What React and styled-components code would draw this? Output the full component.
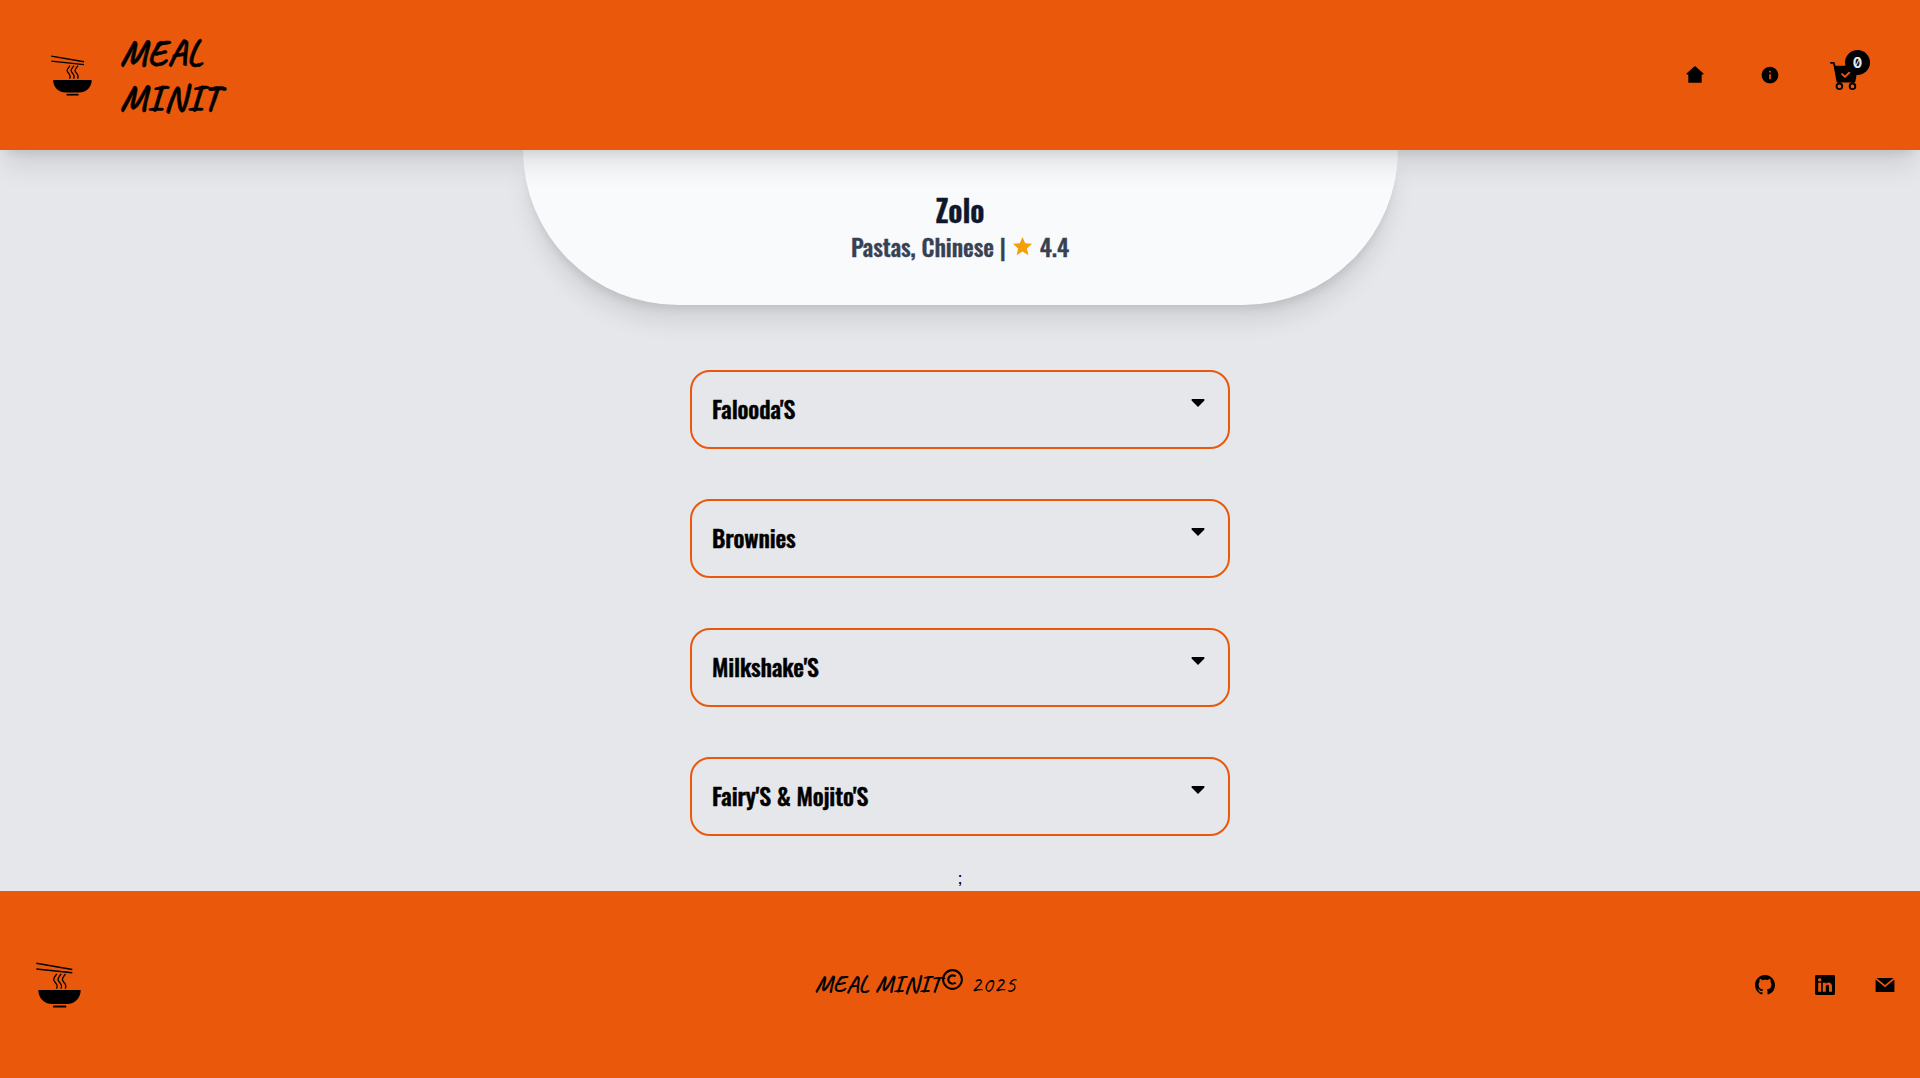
import React from "react";
import styled, { createGlobalStyle } from "styled-components";
import { BsCartCheckFill, BsGithub, BsLinkedin } from "react-icons/bs";
import { BiCopyright } from "react-icons/bi";
import { MdInfo, MdStar } from "react-icons/md";
import { TiArrowSortedDown } from "react-icons/ti";

const shadow = "0 20px 25px -5px rgba(0, 0, 0, 0.1), 0 8px 10px -6px rgba(0, 0, 0, 0.1)";

const Global = createGlobalStyle`
  *, *::before, *::after { box-sizing: border-box; }
  body { margin: 0; background: #e5e7eb; font-family: Oswald, Roboto, sans-serif; color: #000; }
  h1, h2, h3, p { margin: 0; font: inherit; }
  svg { display: block; flex: none; }
`;

const Page = styled.div`
  display: flex;
  flex-direction: column;
  height: 1078px;
  overflow: hidden;
`;

const Header = styled.header`
  position: relative;
  z-index: 1;
  display: flex;
  flex: none;
  align-items: center;
  justify-content: space-between;
  height: 150px;
  padding: 0 60px 0 51px;
  background: #ea580c;
  box-shadow: ${shadow};
`;

const Brand = styled.div`
  display: flex;
  align-items: center;
  gap: 28px;
`;

const BrandName = styled.h1`
  width: 120px;
  padding-top: 2px;
  font: 700 36px/45px Caveat, "Open Sans", cursive;
  letter-spacing: 0.027em;
  -webkit-text-stroke: 0.5px currentColor;
`;

const Nav = styled.nav`
  display: flex;
  align-items: center;
`;

const NavItem = styled.a`
  position: relative;
  display: flex;
  margin-left: ${(p) => p.$gap || 0}px;
`;

const Badge = styled.span`
  position: absolute;
  left: 15px;
  top: -10px;
  width: 25px;
  height: 25px;
  border-radius: 50%;
  background: #000;
  color: #e2e8f0;
  font: 700 14px/26px Inter, sans-serif;
  font-feature-settings: "zero";
  text-align: center;
`;

const Main = styled.main`
  display: flex;
  flex: none;
  flex-direction: column;
  align-items: center;
  height: 741px;
`;

const Hero = styled.section`
  display: flex;
  flex: none;
  flex-direction: column;
  align-items: center;
  width: 875px;
  height: 155px;
  padding-top: 39px;
  border-radius: 0 0 155px 155px;
  background: #f9fafc;
  box-shadow: ${shadow};
`;

const Title = styled.h2`
  font-size: 30px;
  font-weight: 600;
  line-height: 42px;
  color: #0f172a;
  -webkit-text-stroke: 0.4px currentColor;
`;

const Cuisine = styled.h3`
  display: flex;
  align-items: center;
  height: 31px;
  font-size: 24px;
  font-weight: 500;
  line-height: 31px;
  letter-spacing: -0.04px;
  color: #374151;
  -webkit-text-stroke: 0.4px currentColor;
`;

const Star = styled(MdStar)`
  width: 23px;
  height: 23px;
  margin: 0 6px 0 5px;
  color: #f59e0b;
  -webkit-text-stroke: 0;
`;

const Menu = styled.section`
  display: flex;
  flex-direction: column;
  gap: 50px;
  margin-top: 65px;
`;

const Category = styled.div`
  display: flex;
  justify-content: space-between;
  width: 540px;
  height: 79px;
  padding: 19px 18px 0 20px;
  border: 2px solid #ea580c;
  border-radius: 20px;
  font-size: 24px;
  font-weight: 500;
  line-height: 35px;
  letter-spacing: -0.12px;
  -webkit-text-stroke: 0.5px currentColor;
`;

const Stray = styled.p`
  margin-top: 30px;
  font-size: 16px;
  line-height: 24px;
`;

const Footer = styled.footer`
  display: flex;
  flex: none;
  align-items: center;
  justify-content: space-between;
  height: 187px;
  padding: 0 25px 0 36px;
  background: #ea580c;
`;

const Rights = styled.div`
  display: flex;
  align-items: center;
  margin: -2px 5px 0 0;
  font: 400 24px/30px Caveat, "Open Sans", cursive;
  letter-spacing: 0.025em;
`;

const FooterName = styled.span`
  font-weight: 700;
  letter-spacing: 0.016em;
`;

const CopyMark = styled(BiCopyright)`
  width: 25px;
  height: 25px;
  margin: -9px 6px 0 -1px;
`;

const Social = styled.div`
  display: flex;
  align-items: center;
  gap: 40px;
`;

const NoodleBowl = ({ width, height }) => (
  <svg width={width} height={height} viewBox="50 305 134 140" preserveAspectRatio="none">
    <g fill="none" stroke="#000">
      <path d="M51 309L158 328M51 326L158 338" strokeWidth="4.5" />
      <path d="M112 341c-12 16-12 18-4 27 6 7 7 10 3 18M125 341c-12 16-12 18-4 27 6 7 7 10 3 18M138 341c-12 16-12 18-4 27 6 7 7 10 3 18" strokeWidth="4" />
      <path d="M101 440.500h39" strokeWidth="6" />
    </g>
    <path d="M57 390h126c0 22-15 43-42 43H99c-27 0-42-21-42-43z" />
  </svg>
);

const House = () => (
  <svg width="18" height="19" viewBox="-.5 0 18 19">
    <path d="M8.500 0L17 7.600V8.400H15.200V16.200Q15.200 16.700 14.700 16.700H2.300Q1.800 16.700 1.800 16.200V8.400H0V7.600Z" />
  </svg>
);

const Mail = () => (
  <svg width="20" height="16" viewBox="0 0 20 16">
    <path d="M1.500 1H18.500L10 8ZM.6 2.500L10 10.300L19.400 2.500V15H.6Z" />
  </svg>
);

const categories = ["Falooda'S", "Brownies", "Milkshake'S", "Fairy'S & Mojito'S"];

export default function App() {
  return (
    <Page>
      <Global />
      <Header>
        <Brand>
          <NoodleBowl width={41} height={41} />
          <BrandName>MEAL<br />MINIT</BrandName>
        </Brand>
        <Nav>
          <NavItem><House /></NavItem>
          <NavItem $gap={56}><MdInfo size={20} /></NavItem>
          <NavItem $gap={50}>
            <BsCartCheckFill size={30} />
            <Badge>0</Badge>
          </NavItem>
        </Nav>
      </Header>
      <Main>
        <Hero>
          <Title>Zolo</Title>
          <Cuisine>Pastas, Chinese |<Star />4.4</Cuisine>
        </Hero>
        <Menu>
          {categories.map((name) => (
            <Category key={name}>
              <span>{name}</span>
              <TiArrowSortedDown size={24} />
            </Category>
          ))}
        </Menu>
        <Stray>;</Stray>
      </Main>
      <Footer>
        <NoodleBowl width={45} height={46} />
        <Rights>
          <FooterName>MEAL MINIT</FooterName>
          <CopyMark />
          <span>2025</span>
        </Rights>
        <Social>
          <BsGithub size={20} />
          <BsLinkedin size={20} />
          <Mail />
        </Social>
      </Footer>
    </Page>
  );
}
